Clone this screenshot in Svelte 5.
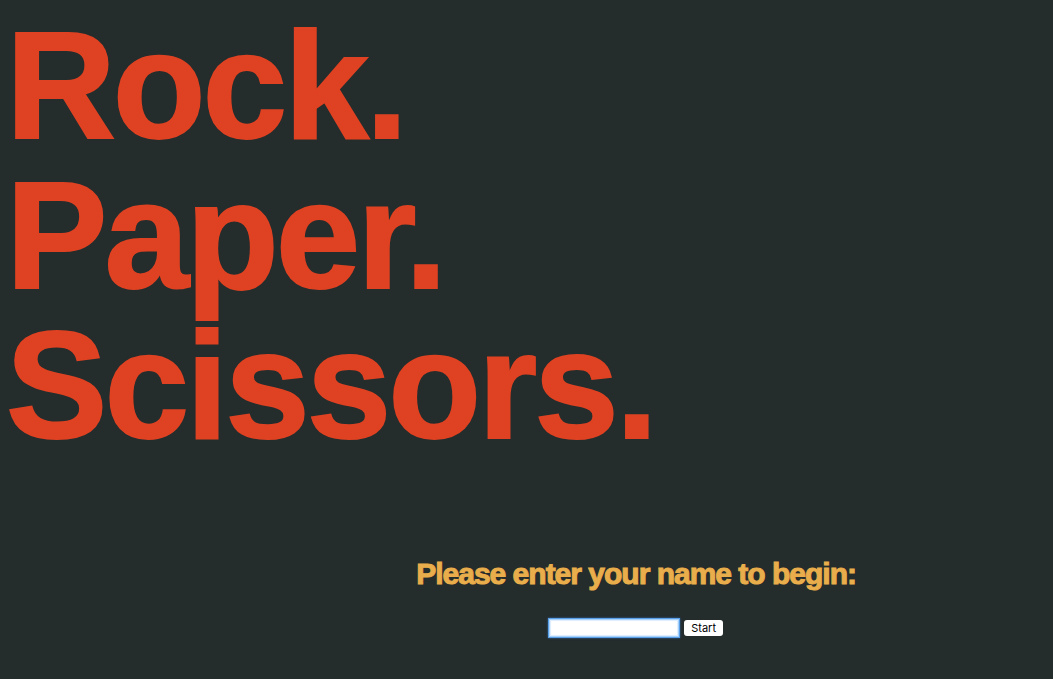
<script>
  let name = $state('');
  let field;
  $effect(() => field.focus());
</script>

<main>
  <h1><span>Rock.</span><span>Paper.</span><span>Scissors.</span></h1>
  <form onsubmit={(event) => event.preventDefault()}>
    <label for="player">Please enter your name to begin:</label>
    <div class="entry">
      <input id="player" type="text" autocomplete="off" bind:value={name} bind:this={field} />
      <button type="submit">Start</button>
    </div>
  </form>
</main>

<style>
  :global(body) {
    margin: 0;
    background: #252c2c;
  }

  main {
    box-sizing: border-box;
    min-height: 100vh;
    padding: 10px 0 0 6px;
    font-family: "Helvetica Neue", "Liberation Sans", Arial, sans-serif;
  }

  h1 {
    margin: 0;
    color: #df4222;
    font-size: 152px;
    line-height: 150px;
    font-weight: 700;
    letter-spacing: -3px;
    -webkit-text-stroke: 2px #df4222;
  }

  h1 span {
    display: block;
  }

  form {
    display: flex;
    flex-direction: column;
    align-items: center;
    width: fit-content;
    margin: 94px 197px 0 auto;
    gap: 25px;
  }

  label {
    color: #e9ae4b;
    font-size: 30px;
    line-height: 40px;
    font-weight: 700;
    letter-spacing: -1px;
    white-space: nowrap;
    -webkit-text-stroke: 1px #e9ae4b;
  }

  .entry {
    display: flex;
    align-items: center;
    gap: 5px;
  }

  input {
    box-sizing: border-box;
    width: 130px;
    height: 18px;
    padding: 1px 3px;
    border: 1px solid #a9d2fb;
    outline: none;
    background: #fff;
    box-shadow: 0 0 0 1px #5aa0e8, 0 0 2px 1px #2f6cab, inset 0 0 1px 1px #dceeff;
    font: 11px/14px "Liberation Sans", Arial, sans-serif;
    caret-color: transparent;
  }

  button {
    height: 16px;
    padding: 0 7px;
    border: 0;
    border-radius: 3px;
    background: #fff;
    color: #000;
    font: 11px/16px Inter, sans-serif;
  }
</style>
